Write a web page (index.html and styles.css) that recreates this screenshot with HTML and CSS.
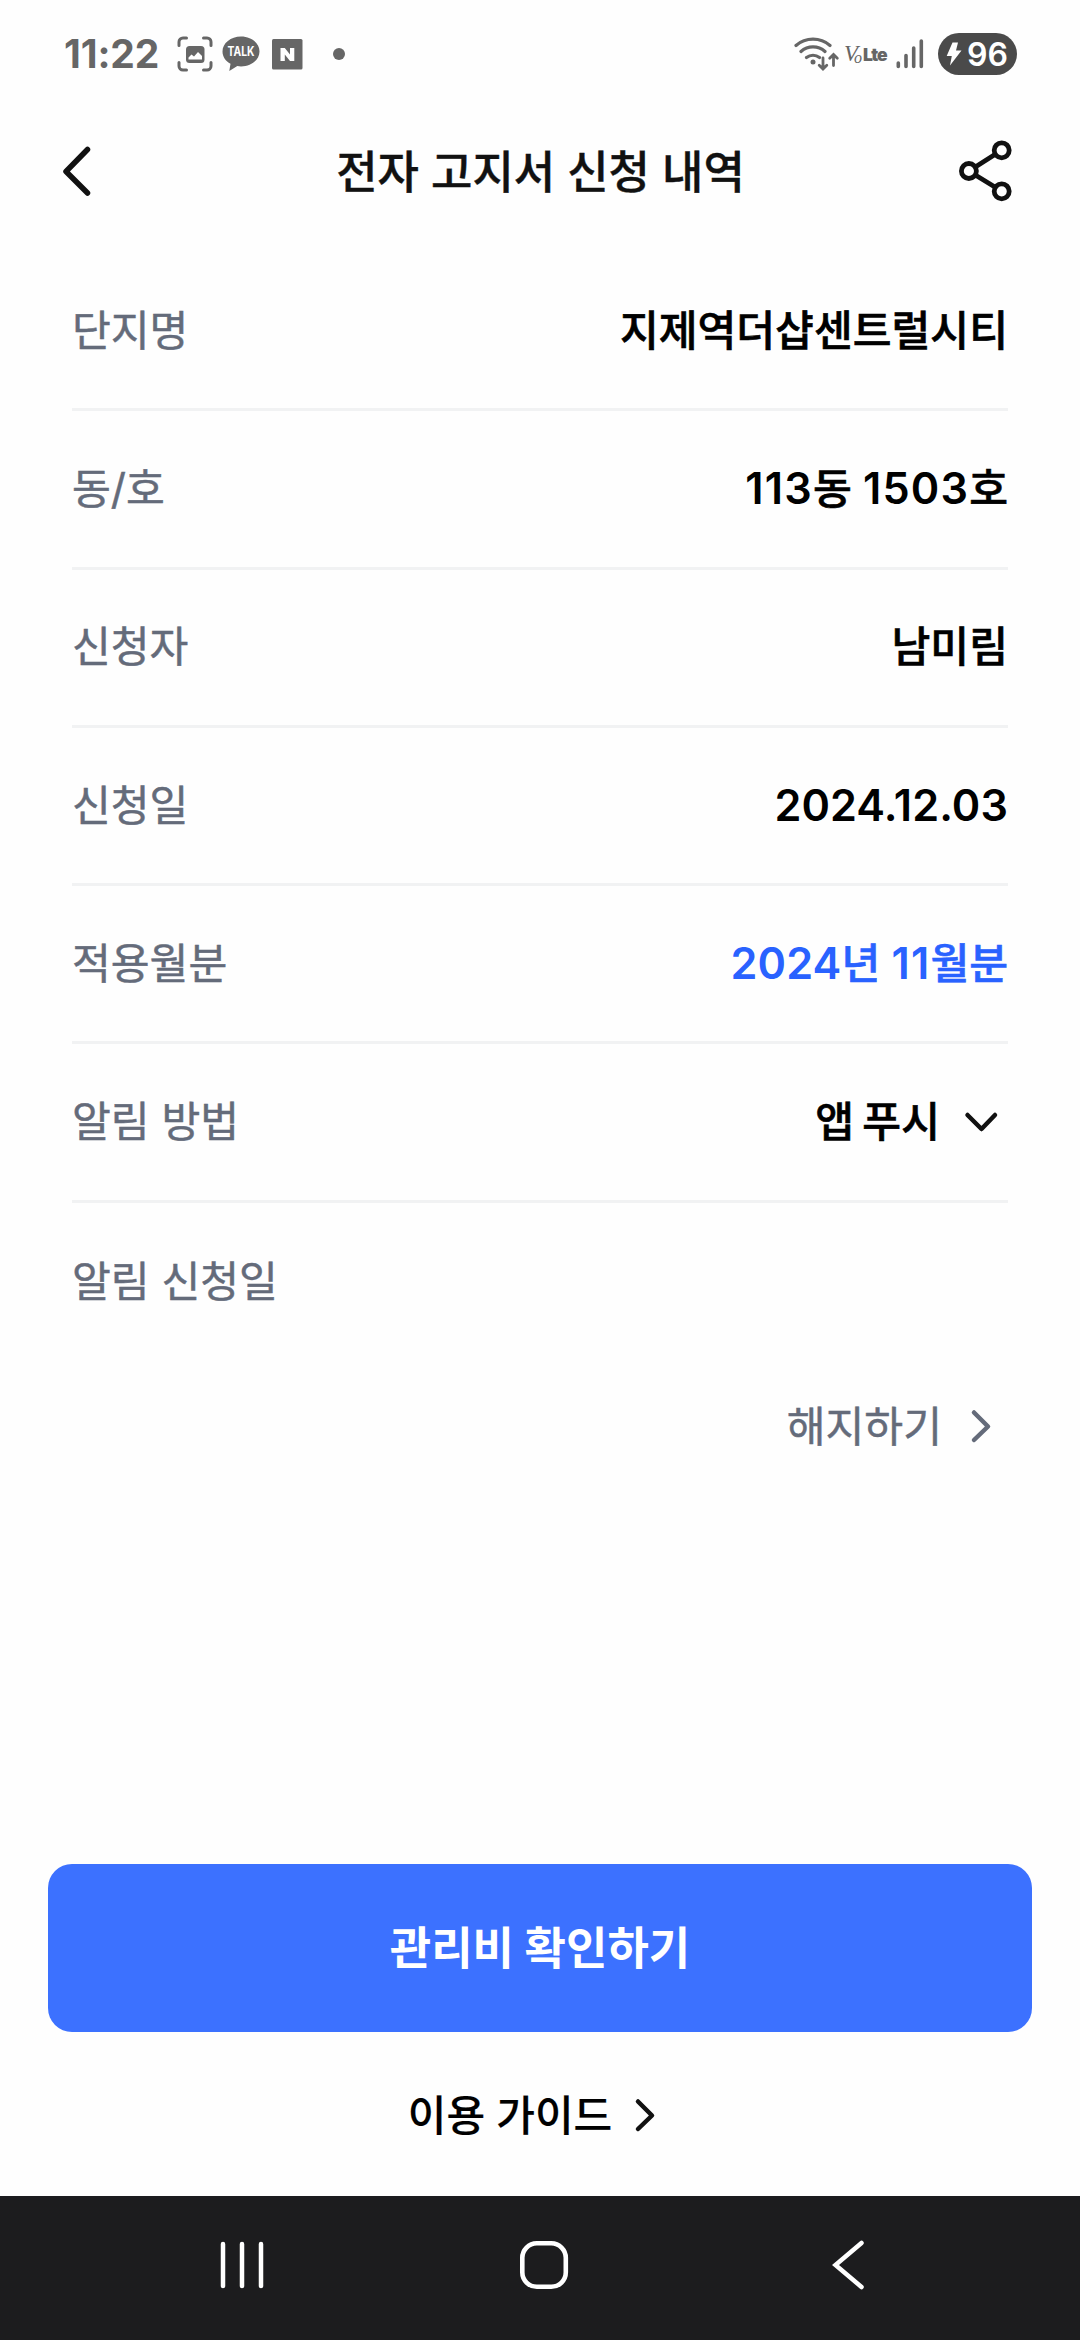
FILE: index.html
```html
<!DOCTYPE html>
<html lang="ko">
<head>
<meta charset="utf-8">
<title>전자 고지서 신청 내역</title>
<link rel="stylesheet" href="styles.css">
</head>
<body>
<div class="screen">
  <div class="status">
    <div class="status-left">
      <span class="clock">11:22</span>
      <svg class="ic-shot" width="36" height="36" viewBox="0 0 36 36"><g fill="none" stroke="#666" stroke-width="3" stroke-linecap="round"><path d="M2 9.500V6a4 4 0 0 1 4-4h3.500M26.500 2H30a4 4 0 0 1 4 4v3.500M34 26.500V30a4 4 0 0 1-4 4h-3.500M9.500 34H6a4 4 0 0 1-4-4v-3.500"/></g><rect x="9" y="10" width="18.500" height="17" rx="3.500" fill="#666"/><path d="M11.500 23.500v-2l3-3 2.500 2 4-4.500 4 4v3.500z" fill="#fff"/></svg>
      <svg class="ic-talk" width="38" height="36" viewBox="0 0 38 36"><path d="M19 0.500C8.800 0.500 0.500 7.200 0.500 15.500c0 5.300 3.200 9.700 8 12.200L7.300 35l8-5c1.200.3 2.400.4 3.700.4 10.200 0 18.500-6.700 18.500-15S29.200.5 19 .5z" fill="#666"/><text x="19" y="20.300" text-anchor="middle" textLength="27" lengthAdjust="spacingAndGlyphs" class="talk">TALK</text></svg>
      <svg class="ic-n" width="31" height="31" viewBox="0 0 31 31"><rect width="30.500" height="30.500" rx="1.500" fill="#666"/><path d="M8.500 22V9h4.300l5.200 6.600V9h4.300v13h-4.300l-5.200-6.600V22z" fill="#fff"/></svg>
      <span class="dot"></span>
    </div>
    <div class="status-right">
      <svg width="46" height="36" viewBox="0 0 46 36"><g fill="none" stroke="#666" stroke-width="3.200" stroke-linecap="round"><path d="M2 9.500a26 26 0 0 1 34 0M7 15.500a18 18 0 0 1 24 0M12.500 21.500a10.500 10.500 0 0 1 13 0"/></g><circle cx="19" cy="26" r="2.500" fill="#666"/><path d="M29 22v10.500M25.200 29.200l3.800 3.800 3.800-3.800M39.500 29.500V19M35.700 22.300l3.800-3.800 3.800 3.800" fill="none" stroke="#666" stroke-width="2.800" stroke-linecap="round"/></svg>
      <span class="volte"><i>V<small>o</small></i><b>Lte</b></span>
      <svg class="ic-signal" width="28" height="30" viewBox="0 0 28 30"><path d="M2.300 24v3.500M10 16.500v11M17.700 9v18.500M25.300 2v25.500" stroke="#666" stroke-width="3.600" stroke-linecap="round"/></svg>
      <span class="battery"><svg width="16" height="24" viewBox="0 0 16 24"><path d="M6.500 0.500h5.500L10 8.500h5.500L4 23.500l1.800-9.500H.7z" fill="#fff"/></svg><span>96</span></span>
    </div>
  </div>
  <header class="bar">
    <svg width="60" height="60" viewBox="0 0 60 60"><path d="M39.500 8.500L18 30.500l21.500 21.500" fill="none" stroke="#111" stroke-width="5.500" stroke-linecap="round" stroke-linejoin="round"/></svg>
    <h1>전자 고지서 신청 내역</h1>
    <svg class="share" width="60" height="62" viewBox="0 0 60 62"><g fill="none" stroke="#111" stroke-width="4.800"><circle cx="42.700" cy="10.300" r="7.500"/><circle cx="9.900" cy="31" r="7.500"/><circle cx="42.700" cy="51.300" r="7.500"/><path d="M16.300 27l20-12.700M16.300 35l20 12.300"/></g></svg>
  </header>
  <dl class="rows">
    <div class="row"><dt>단지명</dt><dd>지제역더샵센트럴시티</dd></div>
    <div class="row"><dt>동/호</dt><dd><span class="num wide">113</span>동 <span class="num wide">1503</span>호</dd></div>
    <div class="row"><dt>신청자</dt><dd>남미림</dd></div>
    <div class="row"><dt>신청일</dt><dd><span class="num">2024.12.03</span></dd></div>
    <div class="row"><dt>적용월분</dt><dd class="blue"><span class="num">2024</span>년 <span class="num wide">11</span>월분</dd></div>
    <div class="row"><dt>알림 방법</dt><dd class="select">앱 푸시<svg width="36" height="24" viewBox="0 0 36 24"><path d="M4.500 5L18.500 19 32 5" fill="none" stroke="#111" stroke-width="4.500" stroke-linecap="round" stroke-linejoin="round"/></svg></dd></div>
    <div class="row"><dt>알림 신청일</dt><dd></dd></div>
  </dl>
  <div class="cancel"><span>해지하기</span><svg width="24" height="36" viewBox="0 0 24 36"><path d="M4 4.500L18 18.500 4 32" fill="none" stroke="#646b7a" stroke-width="4.500" stroke-linecap="round" stroke-linejoin="round"/></svg></div>
  <div class="actions">
    <button class="primary">관리비 확인하기</button>
    <div class="guide"><span>이용 가이드</span><svg width="24" height="36" viewBox="0 0 24 36"><path d="M4 4.500L18 18.500 4 32" fill="none" stroke="#111" stroke-width="4.500" stroke-linecap="round" stroke-linejoin="round"/></svg></div>
  </div>
  <nav class="nav">
    <svg width="44" height="50" viewBox="0 0 44 50"><path d="M3 4v42M22 4v42M41 4v42" stroke="#fff" stroke-width="4.500" stroke-linecap="round"/></svg>
    <svg class="home" width="50" height="50" viewBox="0 0 50 50"><rect x="3.300" y="3.300" width="43.500" height="43.500" rx="14.500" fill="none" stroke="#fff" stroke-width="4.600"/></svg>
    <svg width="34" height="50" viewBox="0 0 34 50"><path d="M30.500 3L4.500 25l26 22" fill="none" stroke="#fff" stroke-width="4.500" stroke-linecap="round"/></svg>
  </nav>
</div>
</body>
</html>
```

FILE: styles.css
```css
* { box-sizing: border-box; margin: 0; padding: 0; }
body { background: #fefefe; font-family: Inter, "Noto Sans CJK KR", sans-serif; color: #000; }
svg { display: block; flex: none; }
.screen { width: 1080px; height: 2340px; display: flex; flex-direction: column; overflow: hidden; }

.status { height: 108px; display: flex; justify-content: space-between; padding: 0 63px 0 64px; color: #666; }
.status-left, .status-right { display: flex; align-items: center; }
.clock { width: 113px; font-size: 39px; font-weight: 650; line-height: 46px; letter-spacing: -0.1px; }
.ic-talk { margin-left: 9px; }
.ic-n { margin-left: 12px; }
.dot { width: 12px; height: 12px; margin-left: 30px; border-radius: 50%; background: #666; }
.talk { font-size: 13px; font-weight: 700; fill: #fff; }
.volte { display: flex; align-items: baseline; width: 44px; margin: 0 8px 0 4px; white-space: nowrap; }
.volte i { width: 19px; font: italic 23px "Liberation Serif", serif; letter-spacing: -4px; }
.volte small { font-size: 16px; vertical-align: -2px; }
.volte b { font-size: 17.500px; font-weight: 900; letter-spacing: -1.2px; }
.battery { display: flex; align-items: center; gap: 5px; width: 79px; height: 42px; margin-left: 14px; padding-left: 8px; border-radius: 21px; background: #4a4a4a; color: #fff; font-size: 32px; font-weight: 600; }

.bar { height: 145px; display: flex; justify-content: space-between; padding: 33px 55px 0 48px; }
.bar h1 { margin-left: 14px; padding-top: 2px; font-size: 45px; font-weight: 500; line-height: 60px; color: #111; -webkit-text-stroke: 0.4px; }
.share { margin-top: -1px; margin-right: -1px; width: 67px; padding-right: 7px; }

.rows { padding: 0 72px; }
.row { height: 158.300px; display: flex; justify-content: space-between; align-items: center; border-bottom: 3px solid #f1f2f3; font-size: 42.200px; line-height: 60px; }
.row:last-child { border-bottom: 0; }
dt { color: #646b7a; font-weight: 400; -webkit-text-stroke: 0.5px; }
dd { font-weight: 500; -webkit-text-stroke: 0.6px; }
.num { font-size: 43.200px; font-weight: 600; letter-spacing: 0.1px; -webkit-text-stroke: 0; }
.wide { letter-spacing: 1.2px; }
.blue { color: #2962ff; }
.select { display: flex; align-items: center; gap: 23px; padding-right: 9px; word-spacing: -3px; }

.cancel { display: flex; justify-content: flex-end; align-items: center; gap: 28px; height: 60px; margin-top: 35px; padding-right: 86px; font-size: 42.200px; color: #646b7a; -webkit-text-stroke: 0.5px; }
.cancel span, .guide span { padding-bottom: 5px; }
.actions { margin-top: auto; height: 332px; padding: 0 48px; }
.primary { display: block; width: 100%; height: 168px; padding-bottom: 5px; border: 0; border-radius: 24px; background: #3c71ff; color: #fff; font: 700 45px Inter, "Noto Sans CJK KR", sans-serif; }
.guide { display: flex; justify-content: center; align-items: center; gap: 22px; height: 60px; margin-top: 53px; padding-right: 14px; font-size: 42px; font-weight: 500; -webkit-text-stroke: 0.2px; }
.nav { height: 144px; flex: none; display: flex; justify-content: space-between; align-items: center; padding: 0 215px 6px 220px; background: #1c1c1e; }
.home { margin-right: 7px; }
```
